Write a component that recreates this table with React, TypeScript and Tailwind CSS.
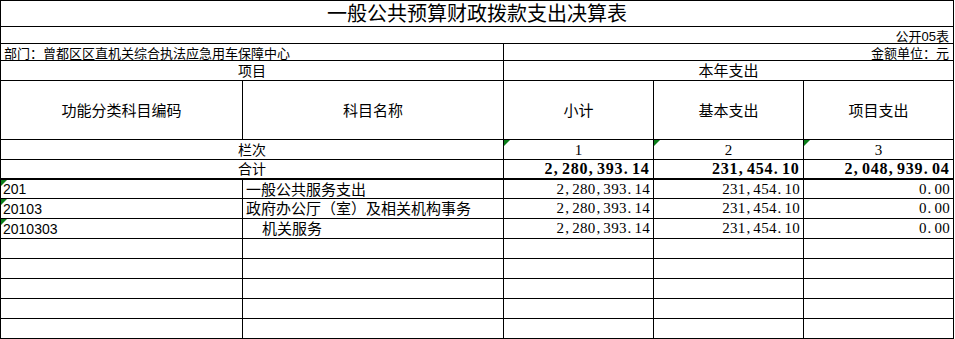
import React from "react";

function Tri() {
  return (
    <span className="absolute left-0 top-0 h-0 w-0 border-t-[6px] border-r-[6px] border-t-[#0a7d1a] border-r-transparent" />
  );
}

function Cell({
  className = "",
  children,
  tri = false,
}: {
  className?: string;
  children?: React.ReactNode;
  tri?: boolean;
}) {
  return (
    <div className={"relative flex items-center bg-white leading-none whitespace-nowrap " + className}>
      {tri && <Tri />}
      {children}
    </div>
  );
}

function Num({ v, bold = false }: { v: string; bold?: boolean }) {
  return (
    <span className={bold ? "flex font-['Liberation_Serif',serif] text-[16px] font-bold" : "flex font-['Liberation_Serif',serif] text-[15px]"}>
      {v.split("").map((ch, i) => {
        const punct = ch === "," || ch === ".";
        const w = bold ? "w-[8.75px]" : "w-[7.8px]";
        return (
          <span key={i} className={"inline-block " + w + (punct ? " text-left pl-[1px]" : " text-center")}>
            {ch}
          </span>
        );
      })}
    </span>
  );
}

const rows = [
  { code: "201", name: "一般公共服务支出", indent: false, a: "2,280,393.14", b: "231,454.10", c: "0.00" },
  { code: "20103", name: "政府办公厅（室）及相关机构事务", indent: false, a: "2,280,393.14", b: "231,454.10", c: "0.00" },
  { code: "2010303", name: "机关服务", indent: true, a: "2,280,393.14", b: "231,454.10", c: "0.00" },
];

export default function App() {
  const empty = [0, 1, 2, 3, 4];
  return (
    <div className="w-[955px] h-[339px] bg-white text-black font-['Liberation_Sans','Noto_Sans_CJK_SC',sans-serif]">
      <div className="grid w-[954px] gap-px bg-black p-px grid-cols-[241px_260px_149px_149px_149px] grid-rows-[25px_16px_16px_19px_58px_19px_19px_18px_repeat(7,19px)]">
        {/* title */}
        <Cell className="col-span-5 justify-center text-[20px]">一般公共预算财政拨款支出决算表</Cell>
        {/* 公开05表 */}
        <Cell className="col-span-5 justify-end pr-[4px] text-[13px] pt-[2px]">公开05表</Cell>
        {/* dept row */}
        <Cell className="col-span-2 pl-[3px] text-[13px] pt-[2px]">部门：曾都区区直机关综合执法应急用车保障中心</Cell>
        <Cell className="col-span-3 justify-end pr-[4px] text-[13px] pt-[2px]">金额单位：元</Cell>
        {/* 项目 / 本年支出 */}
        <Cell className="col-span-2 justify-center text-[14px]">项目</Cell>
        <Cell className="col-span-3 justify-center text-[15px]">本年支出</Cell>
        {/* headers */}
        <Cell className="justify-center text-[15px]">功能分类科目编码</Cell>
        <Cell className="justify-center text-[15px]">科目名称</Cell>
        <Cell className="justify-center text-[15px]">小计</Cell>
        <Cell className="justify-center text-[15px]">基本支出</Cell>
        <Cell className="justify-center text-[15px]">项目支出</Cell>
        {/* 栏次 */}
        <Cell className="col-span-2 justify-center text-[14px]">栏次</Cell>
        <Cell tri className="justify-center pt-[2px] text-[15px] font-['Liberation_Serif',serif]">1</Cell>
        <Cell tri className="justify-center pt-[2px] text-[15px] font-['Liberation_Serif',serif]">2</Cell>
        <Cell tri className="justify-center pt-[2px] text-[15px] font-['Liberation_Serif',serif]">3</Cell>
        {/* 合计 */}
        <Cell className="col-span-2 justify-center text-[14px] border-b border-black">合计</Cell>
        <Cell className="justify-end pr-[4px] border-b border-black"><Num bold v="2,280,393.14" /></Cell>
        <Cell className="justify-end pr-[4px] border-b border-black"><Num bold v="231,454.10" /></Cell>
        <Cell className="justify-end pr-[4px] border-b border-black"><Num bold v="2,048,939.04" /></Cell>
        {/* data */}
        {rows.map((r) => (
          <React.Fragment key={r.code}>
            <Cell tri className="pl-[2px] text-[14px]">{r.code}</Cell>
            <Cell className={(r.indent ? "pl-[19px] " : "pl-[3px] ") + "text-[15px]"}>{r.name}</Cell>
            <Cell className="justify-end pr-[3px]"><Num v={r.a} /></Cell>
            <Cell className="justify-end pr-[3px]"><Num v={r.b} /></Cell>
            <Cell className="justify-end pr-[3px]"><Num v={r.c} /></Cell>
          </React.Fragment>
        ))}
        {empty.map((i) => (
          <React.Fragment key={i}>
            <Cell />
            <Cell />
            <Cell />
            <Cell />
            <Cell />
          </React.Fragment>
        ))}
      </div>
    </div>
  );
}
